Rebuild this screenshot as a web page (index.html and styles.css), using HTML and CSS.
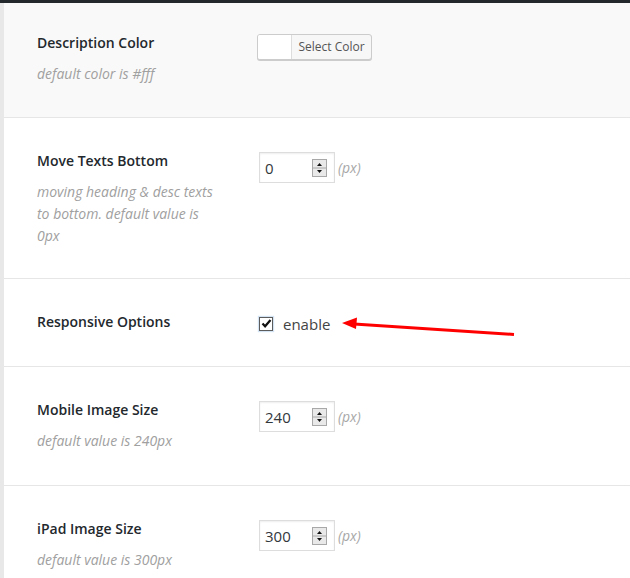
FILE: index.html
```html
<!DOCTYPE html>
<html>
<head>
<meta charset="utf-8">
<link rel="stylesheet" href="styles.css">
</head>
<body>
<div class="topbar"></div>
<div class="page">
  <div class="row row-first">
    <div class="label-cell">
      <div class="label">Description Color</div>
      <div class="desc">default color is #fff</div>
    </div>
    <div class="control-cell">
      <div class="color-btn"><span class="swatch"></span><span class="color-text">Select Color</span></div>
    </div>
  </div>

  <div class="row row-tight">
    <div class="label-cell">
      <div class="label">Move Texts Bottom</div>
      <div class="desc">moving heading &amp; desc texts to bottom. default value is 0px</div>
    </div>
    <div class="control-cell">
      <div class="num-wrap">
        <div class="num-input"><span class="num-val">0</span>
          <svg class="spin" width="15" height="18" viewBox="0 0 15 18"><rect x="0.5" y="0.5" width="14" height="17" fill="#e9e9e9" stroke="#a8a8a8"/><line x1="0" y1="9" x2="15" y2="9" stroke="#a8a8a8"/><path d="M5 7h5l-2.5-3z" fill="#111"/><path d="M5 11h5l-2.5 3z" fill="#111"/></svg>
        </div>
        <span class="unit">(px)</span>
      </div>
    </div>
  </div>

  <div class="row">
    <div class="label-cell">
      <div class="label">Responsive Options</div>
    </div>
    <div class="control-cell">
      <div class="check-line">
        <span class="checkbox"><svg width="11" height="11" viewBox="0 0 11 11"><path d="M1.5 5.5l2.6 2.8L9.5 2" fill="none" stroke="#111" stroke-width="2.2"/></svg></span>
        <span class="check-text">enable</span>
      </div>
    </div>
  </div>

  <div class="row row-loose">
    <div class="label-cell">
      <div class="label">Mobile Image Size</div>
      <div class="desc">default value is 240px</div>
    </div>
    <div class="control-cell">
      <div class="num-wrap">
        <div class="num-input"><span class="num-val">240</span>
          <svg class="spin" width="15" height="18" viewBox="0 0 15 18"><rect x="0.5" y="0.5" width="14" height="17" fill="#e9e9e9" stroke="#a8a8a8"/><line x1="0" y1="9" x2="15" y2="9" stroke="#a8a8a8"/><path d="M5 7h5l-2.5-3z" fill="#111"/><path d="M5 11h5l-2.5 3z" fill="#111"/></svg>
        </div>
        <span class="unit">(px)</span>
      </div>
    </div>
  </div>

  <div class="row">
    <div class="label-cell">
      <div class="label">iPad Image Size</div>
      <div class="desc">default value is 300px</div>
    </div>
    <div class="control-cell">
      <div class="num-wrap">
        <div class="num-input"><span class="num-val">300</span>
          <svg class="spin" width="15" height="18" viewBox="0 0 15 18"><rect x="0.5" y="0.5" width="14" height="17" fill="#e9e9e9" stroke="#a8a8a8"/><line x1="0" y1="9" x2="15" y2="9" stroke="#a8a8a8"/><path d="M5 7h5l-2.5-3z" fill="#111"/><path d="M5 11h5l-2.5 3z" fill="#111"/></svg>
        </div>
        <span class="unit">(px)</span>
      </div>
    </div>
  </div>

  <svg class="arrow" width="190" height="30" viewBox="0 0 190 30"><path d="M178 19.5L18 9" stroke="#f00" stroke-width="3" fill="none"/><path d="M6 8L21 2.5L20 14z" fill="#f00"/></svg>
</div>
</body>
</html>
```

FILE: styles.css
```css
html, body {
  margin: 0;
  padding: 0;
}
body {
  background: #e8e8e8;
  font-family: "Open Sans", "Liberation Sans", sans-serif;
  height: 578px;
  overflow: hidden;
}
.topbar {
  height: 3px;
  background: #23282d;
}
.page {
  position: relative;
  margin-left: 4px;
  background: #fff;
  height: 575px;
}
.row {
  display: grid;
  grid-template-columns: 220px 1fr;
  padding-left: 33px;
  border-bottom: 1px solid #e6e6e6;
}
.row-first {
  background: #f9f9f9;
}
.label-cell {
  padding: 34px 36px 32px 0;
}
.control-cell {
  padding: 34px 0 32px 0;
}
.row-first .label-cell,
.row-first .control-cell {
  padding-top: 31px;
}
.row-tight .label-cell,
.row-tight .control-cell {
  padding-bottom: 31px;
}
.row-loose .label-cell,
.row-loose .control-cell {
  padding-bottom: 33px;
}
.label {
  font-size: 14px;
  font-weight: 600;
  line-height: 18px;
  color: #23282d;
}
.desc {
  margin-top: 11px;
  font-size: 14px;
  font-style: italic;
  font-weight: 400;
  font-stretch: 92%;
  line-height: 22px;
  color: #a0a0a0;
}
.color-btn {
  display: inline-flex;
  height: 24px;
  width: 113px;
  border: 1px solid #cccccc;
  border-radius: 3px;
  background: #f7f7f7;
  box-shadow: 0 1px 0 #cccccc;
  overflow: hidden;
}
.swatch {
  width: 33px;
  background: #fff;
  border-right: 1px solid #dddddd;
}
.color-text {
  flex: 1;
  font-size: 12px;
  line-height: 24px;
  color: #555;
  text-align: center;
}
.num-wrap {
  display: flex;
  align-items: center;
  margin-left: 2px;
}
.num-input {
  height: 29px;
  border: 1px solid #dddddd;
  box-shadow: inset 0 1px 2px rgba(0, 0, 0, 0.07);
  background: #fff;
  display: flex;
  align-items: center;
  padding-left: 5px;
  box-sizing: content-box;
  width: 69px;
}
.num-val {
  font-size: 15px;
  color: #32373c;
}
.spin {
  margin-left: auto;
  margin-right: 7px;
  display: block;
}
.unit {
  margin-left: 3px;
  font-size: 14px;
  font-style: italic;
  font-stretch: 92%;
  color: #a8a8a8;
}
.check-line {
  display: flex;
  align-items: center;
  height: 21px;
  margin-left: 2px;
}
.checkbox {
  width: 12px;
  height: 12px;
  border: 1px solid #5c5c5c;
  background: #fff;
  box-shadow: 0 0 1px 1px #d3e3f3;
  display: flex;
  align-items: center;
  justify-content: center;
}
.check-text {
  margin-left: 10px;
  font-size: 15px;
  color: #444;
}
.arrow {
  position: absolute;
  left: 332px;
  top: 312px;
}
```
